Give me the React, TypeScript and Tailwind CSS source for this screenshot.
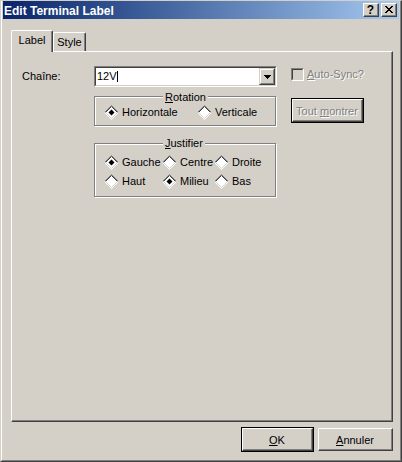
import React from "react";

function Radio({ checked }: { checked?: boolean }) {
  return (
    <svg width="15" height="15" viewBox="0 0 15 15" className="block shrink-0">
      <polygon points="7.5,0.5 14.5,7.5 7.5,14.5 0.5,7.5" fill="#ffffff" />
      <polyline points="0.5,7.5 7.5,0.5 14.5,7.5" fill="none" stroke="#808080" />
      <polyline points="1.5,7.5 7.5,1.5 13.5,7.5" fill="none" stroke="#404040" />
      <polyline points="0.5,7.5 7.5,14.5 14.5,7.5" fill="none" stroke="#ffffff" />
      <polyline points="1.5,7.5 7.5,13.5 13.5,7.5" fill="none" stroke="#D4D0C8" />
      {checked && <polygon points="7.5,4.5 10.5,7.5 7.5,10.5 4.5,7.5" fill="#000000" />}
    </svg>
  );
}

function RadioItem({ label, checked }: { label: string; checked?: boolean }) {
  return (
    <div className="flex items-center gap-[3px] h-[15px]">
      <Radio checked={checked} />
      <span className="whitespace-nowrap">{label}</span>
    </div>
  );
}

function TitleButton({ children }: { children: React.ReactNode }) {
  return (
    <div className="w-[16px] h-[14px] bg-[#D4D0C8] border border-t-white border-l-white border-b-[#404040] border-r-[#404040]">
      <div className="h-full border-b border-r border-b-[#808080] border-r-[#808080] flex items-center justify-center">
        {children}
      </div>
    </div>
  );
}

function DefaultButton({ children, disabled }: { children: React.ReactNode; disabled?: boolean }) {
  return (
    <div className="w-[73px] h-[25px] border border-black">
      <div className="h-full border border-t-white border-l-white border-b-[#404040] border-r-[#404040]">
        <div
          className={
            "h-full border-b border-r border-b-[#808080] border-r-[#808080] flex items-center justify-center pt-[2px] whitespace-nowrap " +
            (disabled ? "text-[#808080] [text-shadow:1px_1px_0_#ffffff]" : "")
          }
        >
          {children}
        </div>
      </div>
    </div>
  );
}

function NormalButton({ children }: { children: React.ReactNode }) {
  return (
    <div className="w-[75px] h-[23px] border border-t-white border-l-white border-b-[#404040] border-r-[#404040]">
      <div className="h-full border-b border-r border-b-[#808080] border-r-[#808080] flex items-center justify-center pt-[2px] whitespace-nowrap">
        {children}
      </div>
    </div>
  );
}

export default function App() {
  return (
    <div className="w-[402px] h-[462px] bg-[#D4D0C8] border-t border-l border-t-[#D4D0C8] border-l-[#D4D0C8] border-r border-b border-r-[#404040] border-b-[#404040] text-[11px] leading-[13px] text-black font-['Liberation_Sans',Arial,sans-serif]">
      <div className="h-full flex flex-col border-l border-l-white border-r border-r-[#808080] border-b border-b-[#808080] px-[1px] pb-[1px]">
        {/* Title bar */}
        <div className="h-[18px] shrink-0 flex items-start bg-linear-to-r from-[#0A246A] to-[#A6CAF0]">
          <div className="flex-1 pl-[1px] pt-[3px] text-white font-bold text-[12px] leading-[14px] whitespace-nowrap">
            Edit Terminal Label
          </div>
          <div className="flex gap-[2px] pt-[2px] pr-[2px]">
            <TitleButton>
              <span className="font-bold text-[12px] leading-none">?</span>
            </TitleButton>
            <TitleButton>
              <svg width="8" height="7" viewBox="0 0 8 7" className="block">
                <path
                  d="M0 0h2v1H0zM6 0h2v1H6zM1 1h2v1H1zM5 1h2v1H5zM2 2h4v1H2zM3 3h2v1H3zM2 4h4v1H2zM1 5h2v1H1zM5 5h2v1H5zM0 6h2v1H0zM6 6h2v1H6z"
                  fill="#000000"
                />
              </svg>
            </TitleButton>
          </div>
        </div>

        {/* Tabs */}
        <div className="mt-[11px] ml-[8px] h-[21px] flex items-end shrink-0">
          <div className="relative z-10 -mb-px w-[42px] h-[22px] bg-[#D4D0C8] border-t border-l border-r border-t-white border-l-white border-r-[#404040] rounded-t-[2px] shadow-[inset_-1px_0_0_#808080] pt-[3px] text-center">
            Label
          </div>
          <div className="w-[33px] h-[19px] border-t border-l border-r border-t-white border-l-white border-r-[#404040] rounded-t-[2px] shadow-[inset_-1px_0_0_#808080] pt-[3px] text-center">
            Style
          </div>
        </div>

        {/* Panel */}
        <div className="ml-[8px] w-[382px] h-[371px] shrink-0 border-t border-l border-t-white border-l-white border-b border-r border-b-[#404040] border-r-[#404040]">
          <div className="h-full border-b border-r border-b-[#808080] border-r-[#808080] flex flex-col pt-[14px]">
            {/* Row 1 */}
            <div className="flex items-start h-[21px]">
              <div className="w-[82px] pl-[10px] h-[21px] flex items-center">Chaîne:</div>
              <div className="w-[183px] h-[21px] border border-t-[#808080] border-l-[#808080] border-b-white border-r-white">
                <div className="h-full flex bg-white border border-t-[#404040] border-l-[#404040] border-b-[#D4D0C8] border-r-[#D4D0C8]">
                  <div className="flex-1 flex items-center pl-[1px]">
                    <span>12V</span>
                    <div className="w-px h-[11px] bg-black" />
                  </div>
                  <div className="w-[16px] h-[17px] bg-[#D4D0C8] border border-t-[#D4D0C8] border-l-[#D4D0C8] border-b-[#404040] border-r-[#404040]">
                    <div className="h-full border border-t-white border-l-white border-b-[#808080] border-r-[#808080] flex items-center justify-center">
                      <svg width="7" height="4" viewBox="0 0 7 4" className="block">
                        <path d="M0 0h7v1H0zM1 1h5v1H1zM2 2h3v1H2zM3 3h1v1H3z" fill="#000000" />
                      </svg>
                    </div>
                  </div>
                </div>
              </div>
              <div className="ml-[14px] mt-[2px] h-[13px] flex items-center gap-[3px]">
                <div className="w-[13px] h-[13px] border border-t-[#808080] border-l-[#808080] border-b-white border-r-white">
                  <div className="h-full bg-[#D4D0C8] border border-t-[#404040] border-l-[#404040] border-b-[#D4D0C8] border-r-[#D4D0C8]" />
                </div>
                <span className="text-[#808080] [text-shadow:1px_1px_0_#ffffff] whitespace-nowrap">
                  <span className="underline">A</span>uto-Sync?
                </span>
              </div>
            </div>

            {/* Row 2 */}
            <div className="flex items-start mt-[9px] ml-[82px]">
              <div className="relative w-[182px] h-[30px] border border-[#808080] shadow-[1px_1px_0_#ffffff,inset_1px_1px_0_#ffffff] pl-[9px] pt-[8px]">
                <span className="absolute left-[68px] -top-[6px] px-[2px] bg-[#D4D0C8] whitespace-nowrap">
                  <span className="underline">R</span>otation
                </span>
                <div className="grid grid-cols-[93px_auto]">
                  <RadioItem label="Horizontale" checked />
                  <RadioItem label="Verticale" />
                </div>
              </div>
              <div className="ml-[15px] mt-[2px]">
                <DefaultButton disabled>
                  <span>
                    Tout <span className="underline">m</span>ontrer
                  </span>
                </DefaultButton>
              </div>
            </div>

            {/* Row 3 */}
            <div className="mt-[17px] ml-[82px]">
              <div className="relative w-[182px] h-[54px] border border-[#808080] shadow-[1px_1px_0_#ffffff,inset_1px_1px_0_#ffffff] pl-[9px] pt-[11px]">
                <span className="absolute left-[68px] -top-[7px] px-[2px] bg-[#D4D0C8] whitespace-nowrap">
                  <span className="underline">J</span>ustifier
                </span>
                <div className="grid grid-cols-[58px_52px_auto] gap-y-[4px]">
                  <RadioItem label="Gauche" checked />
                  <RadioItem label="Centre" />
                  <RadioItem label="Droite" />
                  <RadioItem label="Haut" />
                  <RadioItem label="Milieu" checked />
                  <RadioItem label="Bas" />
                </div>
              </div>
            </div>
          </div>
        </div>

        {/* Buttons */}
        <div className="mt-[5px] h-[25px] flex items-center justify-end gap-[4px] pr-[6px] shrink-0">
          <DefaultButton>
            <span>
              <span className="underline">O</span>K
            </span>
          </DefaultButton>
          <NormalButton>
            <span>
              <span className="underline">A</span>nnuler
            </span>
          </NormalButton>
        </div>
      </div>
    </div>
  );
}
